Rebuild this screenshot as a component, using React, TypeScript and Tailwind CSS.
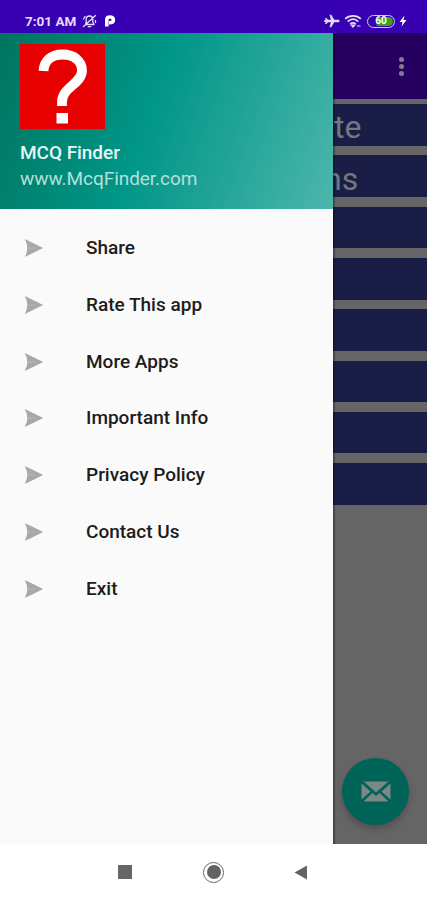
const menuItems = [
  'Share',
  'Rate This app',
  'More Apps',
  'Important Info',
  'Privacy Policy',
  'Contact Us',
  'Exit',
];

const StatusBar = () => (
  <div className="flex h-[33px] shrink-0 items-center bg-[#3800b3] pt-[9px] text-[#e6dcfa]">
    <span className="ml-[25px] w-[52px] whitespace-nowrap text-[13.5px] font-bold leading-4">7:01 AM</span>
    <svg className="ml-[5px] h-4 w-[15px]" viewBox="0 0 15 16" fill="none" stroke="currentColor" strokeWidth="1.3" strokeLinecap="round" strokeLinejoin="round">
      <path d="M3.5 11.500h8.500L10.800 9V6.500C10.800 4.500 9.300 3 7.500 3S4.200 4.500 4.200 6.500V9zM6.300 13.700h2.400M1.500 13.500 13.500 2.500M1.500 6l1.500-2.500M13.500 9.500v-2" />
    </svg>
    <svg className="ml-[7px] h-4 w-3" viewBox="0 0 12 16" fill="none" stroke="white" strokeWidth="3.6">
      <path d="M2.800 13.500V6.500C2.800 4.700 4 4 6 4c2 0 3.400 1 3.400 2.900S8 9.700 5 9.700" />
    </svg>
    <svg className="ml-[208px] h-4 w-4 shrink-0" viewBox="0 0 16 16" fill="currentColor">
      <path d="M15.500 8c0-.8-.6-1.300-1.400-1.300H10.200L7.200 1.800H5.600l1.300 4.900H3.900L2.500 5H1.200L1.700 7H.300v2h1.400L1.200 11h1.300l1.400-1.700h3L5.600 14.200h1.600l3-4.900h3.900c.8 0 1.400-.5 1.400-1.300z" />
    </svg>
    <svg className="ml-[4px] h-4 w-[19px] shrink-0" viewBox="0 0 19 16" fill="none" stroke="currentColor" strokeWidth="1.700">
      <path d="M1.200 5.900C5.500 1.900 12.500 1.900 16.800 5.900M3.700 8.600C7 5.600 11 5.600 14.300 8.600M6.200 11.200C8 9.600 10 9.600 11.800 11.200" />
      <path d="M7.300 12.100 9 14l1.700-1.900zM13 13h3.500" strokeWidth="1.200" />
    </svg>
    <span className="ml-[4px] flex h-[13px] w-[28px] shrink-0 items-center rounded-full border-[1.5px] border-[#d7c9f5] p-px">
      <span className="flex h-full w-full items-center justify-center rounded-full bg-linear-to-r from-[#3800b3] from-30% to-[#3aa416] to-40% text-[10px] font-bold leading-none text-white">60</span>
    </span>
    <svg className="ml-[3px] h-4 w-[10px] shrink-0" viewBox="0 0 10 16" fill="white">
      <path d="M6.500 2.500 1.500 9h3L3.500 13.500 8.500 7h-3z" />
    </svg>
  </div>
);

const DrawerHeader = () => (
  <div className="flex h-[176px] flex-col bg-[linear-gradient(110deg,#00745f_0%,#009688_45%,#4db6ac_100%)] pl-5 pt-[11px]">
    <svg className="h-[85px] w-[85px] bg-[#e70000]" viewBox="0 0 85 85">
      <path d="M23.500 27C24 17 31 10.500 42.500 10.500S62 17 62 26.500C62 40 42 43 42 58v4" fill="none" stroke="white" strokeWidth="9.800" />
      <rect x="36.500" y="69" width="11.500" height="10.500" fill="white" />
    </svg>
    <span className="mt-[12px] text-[19px] font-medium leading-6 tracking-[-0.05px] text-[#e6f7f5]">MCQ Finder</span>
    <span className="mt-[2px] text-[19px] leading-6 tracking-[-0.05px] text-[#b2e0db]">www.McqFinder.com</span>
  </div>
);

const MenuItem = ({ label }: { label: string }) => (
  <li className="flex h-[56.850px] items-center pl-[24px]">
    <svg className="h-[20px] w-[20px]" viewBox="0 0 20 20">
      <path d="M.9 1 19.200 10 .9 19Q3.300 14 3.300 10T.9 1z" fill="#a8a8a8" />
      <path d="M3.300 10h8" stroke="#b8b8b8" strokeWidth="1" />
    </svg>
    <span className="ml-[42px] text-[19px] font-medium leading-6 text-[#1c1c1c]">{label}</span>
  </li>
);

const ListRow = ({ text = '' }: { text?: string }) => (
  <div className="flex h-[41.500px] items-center bg-[#1a1e47] text-[32px] leading-10 text-[#75787f]">
    <span className="pt-[5px]">{text}</span>
  </div>
);

export default function App() {
  return (
    <div className="flex h-[900px] w-[427px] flex-col overflow-hidden bg-white font-['Roboto',sans-serif]">
      <StatusBar />
      <div className="flex h-[811px]">
        <aside className="z-10 w-[333px] shrink-0 bg-[#fafafa]">
          <DrawerHeader />
          <ul className="pt-[10.500px]">
            {menuItems.map((label) => (
              <MenuItem key={label} label={label} />
            ))}
          </ul>
        </aside>

        {/* dimmed page behind the drawer */}
        <main className="relative flex-1 bg-[#656565]">
          <div className="flex h-[66px] items-center justify-end bg-[#250060] pr-[23px]">
            <div className="flex flex-col gap-[2px]">
              <i className="size-[5px] rounded-full bg-[#857b91]" />
              <i className="size-[5px] rounded-full bg-[#857b91]" />
              <i className="size-[5px] rounded-full bg-[#857b91]" />
            </div>
          </div>
          <div className="flex flex-col gap-[9.800px] pt-[5.200px]">
            <div className="bg-[#1a1e47] pl-px">
              <ListRow text="te" />
            </div>
            <div className="-ml-[9px]">
              <ListRow text="ns" />
            </div>
            <ListRow />
            <ListRow />
            <ListRow />
            <ListRow />
            <ListRow />
            <ListRow />
          </div>
          <div className="absolute inset-y-0 left-0 w-[3px] bg-linear-to-r from-black/40 to-transparent" />
          <button className="absolute bottom-[19px] right-[18px] flex size-[67px] items-center justify-center rounded-full bg-[#006357] shadow-[0_4px_7px_rgba(0,0,0,0.22)]">
            <svg className="h-[21px] w-[30px]" viewBox="0 0 30 21">
              <path d="M2.500.500h25L15 11.500zM.5 2.500 9.500 10.500.5 18.500zM29.500 2.500v16l-9-8zM2.500 20.500l8.800-8.400L15 15l3.700-2.900 8.800 8.400z" fill="#7b8885" />
            </svg>
          </button>
        </main>
      </div>

      <nav className="flex flex-1 items-center bg-white pl-[118px]">
        <span className="size-[14px] bg-[#666]" />
        <span className="ml-[71px] flex size-[21px] items-center justify-center rounded-full border-[1.500px] border-[#686868]">
          <span className="size-[14px] rounded-full bg-[#636363]" />
        </span>
        <svg className="ml-[70px] h-[15px] w-[13px]" viewBox="0 0 13 15">
          <path d="M13 .5v14L.5 7.500z" fill="#636363" />
        </svg>
      </nav>
    </div>
  );
}
